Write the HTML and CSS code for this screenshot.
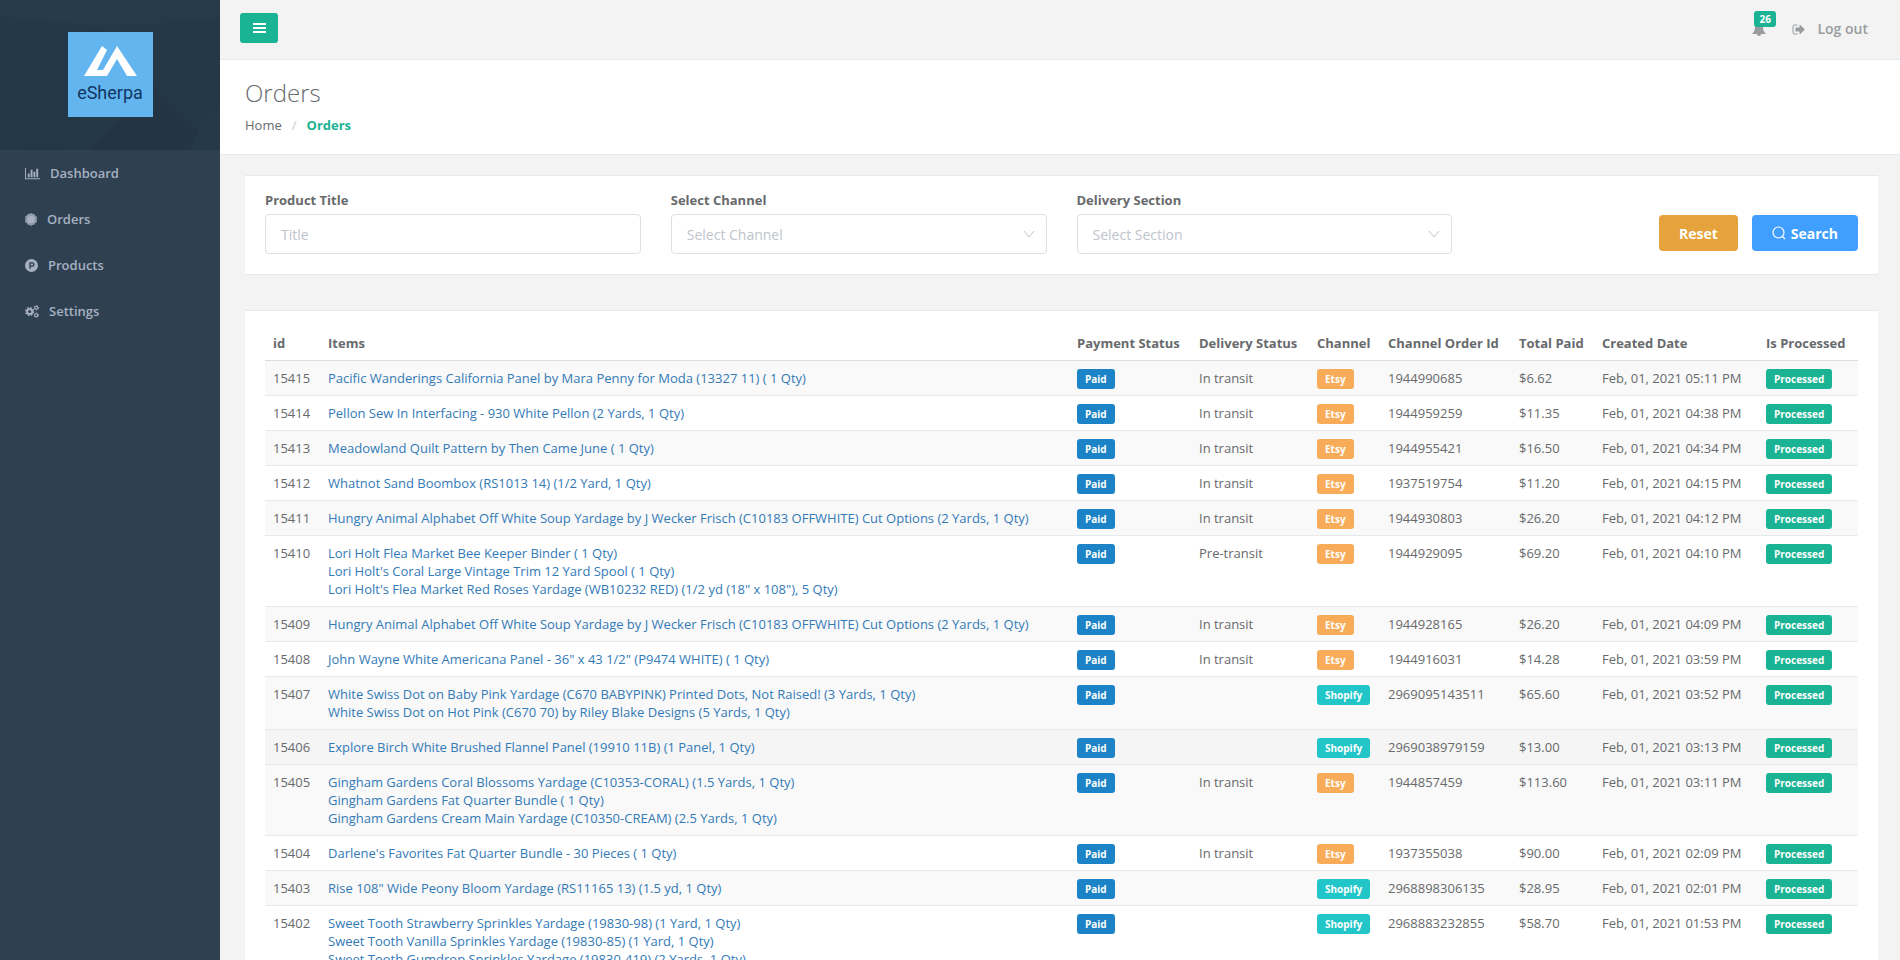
FILE: index.html
```html
<!DOCTYPE html>
<html lang="en">
<head>
  <meta charset="UTF-8" />
  <meta name="viewport" content="width=device-width, initial-scale=1.0"/>
  <title>eSherpa | Orders</title>
  <link rel="stylesheet" href="styles.css">
</head>
<body>
  <div class="wrapper">
    <nav class="sidebar">
      <div class="nav-header">
        <svg class="pattern" viewBox="0 0 220 150" preserveAspectRatio="none" aria-hidden="true">
          <polygon points="0,0 120,0 100,26 0,16" fill="#273b4a"/>
          <polygon points="120,0 220,0 220,20 100,26" fill="#263a49"/>
          <polygon points="0,60 100,26 68,150 25,150" fill="#243747"/>
          <polygon points="153,85 198,130 190,150 90,150" fill="#233545"/>
          <polygon points="198,130 220,110 220,150 190,150" fill="#263949"/>
        </svg>
        <a href="#" class="logo">
          <svg viewBox="0 0 85 85" role="img" aria-label="eSherpa">
            <path d="M16 44 L34 14 L39 18 L29 38 L35 38 L49 14 L69 44 L59 44 L49 27 L39 44 Z" fill="#fff"/>
            <text x="42" y="67" text-anchor="middle" class="logo-text">eSherpa</text>
          </svg>
        </a>
      </div>
      <ul class="menu">
        <li><a href="#">
          <svg width="15" height="13" viewBox="0 128 2048 1536"><path d="M640 896v512h-256v-512h256zm384-512v1024h-256v-1024h256zm1024 1152v128h-2048v-1536h128v1408h1920zm-640-896v768h-256v-768h256zm384-384v1152h-256v-1152h256z"/></svg>
          Dashboard</a></li>
        <li><a href="#">
          <svg width="12" height="13" viewBox="0 0 12 13"><path d="M6 0l1.400.8 1.800.2.900 1.600 1.700 1v5.600l-1.700 1-.900 1.600-1.800.3L6 13l-1.400-.9-1.800-.3-.900-1.600-1.700-1V3.600l1.700-1L2.800 1l1.800-.2z" opacity=".8"/><circle cx="6" cy="6.500" r="3.800"/></svg>
          Orders</a></li>
        <li><a href="#">
          <svg width="13" height="13" viewBox="0 0 13 13"><path fill-rule="evenodd" d="M6.500 0a6.500 6.500 0 1 1 0 13a6.500 6.500 0 0 1 0-13zM4.300 3.200v6.500h1.400V7.800h1.600a2.300 2.300 0 0 0 0-4.600zM5.700 4.600h1.500a.9.9 0 0 1 0 1.800H5.700z"/></svg>
          Products</a></li>
        <li><a href="#">
          <svg width="14" height="13" viewBox="0 0 14 13" fill="none" class="cogs">
            <circle cx="4.700" cy="6.500" r="2.600" stroke-width="2"/>
            <circle cx="4.700" cy="6.500" r="4" stroke-width="1.300" stroke-dasharray="1.600 1.540"/>
            <circle cx="11.300" cy="2.800" r="1.500" stroke-width="1.100"/>
            <circle cx="11.300" cy="2.800" r="2.200" stroke-width="1" stroke-dasharray="1.200 1.100"/>
            <circle cx="11.300" cy="10.200" r="1.500" stroke-width="1.100"/>
            <circle cx="11.300" cy="10.200" r="2.200" stroke-width="1" stroke-dasharray="1.200 1.100"/>
          </svg>
          Settings</a></li>
      </ul>
    </nav>

    <main class="page">
      <header class="topbar">
        <button type="button" class="btn-toggle" aria-label="Toggle menu">
          <svg width="13" height="10" viewBox="0 0 13 10"><path d="M0 0h13v2H0zM0 4h13v2H0zM0 8h13v2H0z" fill="#fff"/></svg>
        </button>
        <div class="top-links">
          <a href="#" class="bell" aria-label="Notifications">
            <svg width="14" height="14" viewBox="0 0 14 14"><path d="M7 0a1 1 0 0 1 1 1.100c2 .4 3 2 3 3.900 0 3 .8 4.800 2.500 6.200V12H9a2 2 0 0 1-4 0H.5v-.8C2.200 9.800 3 8 3 5c0-1.900 1-3.500 3-3.900A1 1 0 0 1 7 0z"/></svg>
            <span class="count">26</span>
          </a>
          <a href="#" class="logout">
            <svg width="13" height="11" viewBox="0 256 1664 1280"><path d="M704 1440q0 4 1 20t.5 26.500-3 23.500-10 19.500-20.500 6.500h-320q-119 0-203.500-84.500t-84.500-203.500v-704q0-119 84.500-203.500t203.500-84.500h320q13 0 22.500 9.500t9.500 22.500q0 4 1 20t.5 26.500-3 23.500-10 19.500-20.500 6.500h-320q-66 0-113 47t-47 113v704q0 66 47 113t113 47h312l11.500 1 11.500 3 8 5.500 7 9 2 13.500zm928-544q0 26-19 45l-544 544q-19 19-45 19t-45-19-19-45v-288h-448q-26 0-45-19t-19-45v-384q0-26 19-45t45-19h448v-288q0-26 19-45t45-19 45 19l544 544q19 19 19 45z"/></svg>
            Log out</a>
        </div>
      </header>

      <div class="page-heading">
        <h2>Orders</h2>
        <ol class="breadcrumb">
          <li><a href="#">Home</a></li>
          <li class="active"><strong>Orders</strong></li>
        </ol>
      </div>

      <div class="content">
        <form class="ibox filters">
          <div class="field">
            <label for="title">Product Title</label>
            <input type="text" id="title" placeholder="Title">
          </div>
          <div class="field">
            <label for="channel">Select Channel</label>
            <div class="select">
              <select id="channel"><option>Select Channel</option><option>Etsy</option><option>Shopify</option></select>
              <svg width="12" height="8" viewBox="0 0 12 8"><path d="M1 1l5 6 5-6"/></svg>
            </div>
          </div>
          <div class="field">
            <label for="section">Delivery Section</label>
            <div class="select">
              <select id="section"><option>Select Section</option><option>Pre-transit</option><option>In transit</option></select>
              <svg width="12" height="8" viewBox="0 0 12 8"><path d="M1 1l5 6 5-6"/></svg>
            </div>
          </div>
          <div class="actions">
            <button type="reset" class="btn btn-warning">Reset</button>
            <button type="button" class="btn btn-primary">
              <svg width="14" height="14" viewBox="0 0 14 14"><circle cx="6.500" cy="6.500" r="5.500"/><path d="M10.500 10.500L13 13"/></svg>
              Search</button>
          </div>
        </form>

        <div class="ibox">
          <table class="table">
            <colgroup>
              <col class="col-id"><col><col class="col-payment"><col class="col-delivery"><col class="col-channel"><col class="col-order"><col class="col-total"><col class="col-date"><col class="col-processed">
            </colgroup>
            <thead>
              <tr><th>id</th><th>Items</th><th>Payment Status</th><th>Delivery Status</th><th>Channel</th><th>Channel Order Id</th><th>Total Paid</th><th>Created Date</th><th>Is Processed</th></tr>
            </thead>
            <tbody>
              <tr>
                <td>15415</td>
                <td><a href="#">Pacific Wanderings California Panel by Mara Penny for Moda (13327 11) ( 1 Qty)</a></td>
                <td><span class="label paid">Paid</span></td><td>In transit</td><td><span class="label etsy">Etsy</span></td>
                <td>1944990685</td><td>$6.62</td><td>Feb, 01, 2021 05:11 PM</td><td><span class="label processed">Processed</span></td>
              </tr>
              <tr>
                <td>15414</td>
                <td><a href="#">Pellon Sew In Interfacing - 930 White Pellon (2 Yards, 1 Qty)</a></td>
                <td><span class="label paid">Paid</span></td><td>In transit</td><td><span class="label etsy">Etsy</span></td>
                <td>1944959259</td><td>$11.35</td><td>Feb, 01, 2021 04:38 PM</td><td><span class="label processed">Processed</span></td>
              </tr>
              <tr>
                <td>15413</td>
                <td><a href="#">Meadowland Quilt Pattern by Then Came June ( 1 Qty)</a></td>
                <td><span class="label paid">Paid</span></td><td>In transit</td><td><span class="label etsy">Etsy</span></td>
                <td>1944955421</td><td>$16.50</td><td>Feb, 01, 2021 04:34 PM</td><td><span class="label processed">Processed</span></td>
              </tr>
              <tr>
                <td>15412</td>
                <td><a href="#">Whatnot Sand Boombox (RS1013 14) (1/2 Yard, 1 Qty)</a></td>
                <td><span class="label paid">Paid</span></td><td>In transit</td><td><span class="label etsy">Etsy</span></td>
                <td>1937519754</td><td>$11.20</td><td>Feb, 01, 2021 04:15 PM</td><td><span class="label processed">Processed</span></td>
              </tr>
              <tr>
                <td>15411</td>
                <td><a href="#">Hungry Animal Alphabet Off White Soup Yardage by J Wecker Frisch (C10183 OFFWHITE) Cut Options (2 Yards, 1 Qty)</a></td>
                <td><span class="label paid">Paid</span></td><td>In transit</td><td><span class="label etsy">Etsy</span></td>
                <td>1944930803</td><td>$26.20</td><td>Feb, 01, 2021 04:12 PM</td><td><span class="label processed">Processed</span></td>
              </tr>
              <tr>
                <td>15410</td>
                <td>
                  <a href="#">Lori Holt Flea Market Bee Keeper Binder ( 1 Qty)</a>
                  <a href="#">Lori Holt's Coral Large Vintage Trim 12 Yard Spool ( 1 Qty)</a>
                  <a href="#">Lori Holt's Flea Market Red Roses Yardage (WB10232 RED) (1/2 yd (18" x 108"), 5 Qty)</a>
                </td>
                <td><span class="label paid">Paid</span></td><td>Pre-transit</td><td><span class="label etsy">Etsy</span></td>
                <td>1944929095</td><td>$69.20</td><td>Feb, 01, 2021 04:10 PM</td><td><span class="label processed">Processed</span></td>
              </tr>
              <tr>
                <td>15409</td>
                <td><a href="#">Hungry Animal Alphabet Off White Soup Yardage by J Wecker Frisch (C10183 OFFWHITE) Cut Options (2 Yards, 1 Qty)</a></td>
                <td><span class="label paid">Paid</span></td><td>In transit</td><td><span class="label etsy">Etsy</span></td>
                <td>1944928165</td><td>$26.20</td><td>Feb, 01, 2021 04:09 PM</td><td><span class="label processed">Processed</span></td>
              </tr>
              <tr>
                <td>15408</td>
                <td><a href="#">John Wayne White Americana Panel - 36" x 43 1/2" (P9474 WHITE) ( 1 Qty)</a></td>
                <td><span class="label paid">Paid</span></td><td>In transit</td><td><span class="label etsy">Etsy</span></td>
                <td>1944916031</td><td>$14.28</td><td>Feb, 01, 2021 03:59 PM</td><td><span class="label processed">Processed</span></td>
              </tr>
              <tr>
                <td>15407</td>
                <td>
                  <a href="#">White Swiss Dot on Baby Pink Yardage (C670 BABYPINK) Printed Dots, Not Raised! (3 Yards, 1 Qty)</a>
                  <a href="#">White Swiss Dot on Hot Pink (C670 70) by Riley Blake Designs (5 Yards, 1 Qty)</a>
                </td>
                <td><span class="label paid">Paid</span></td><td></td><td><span class="label shopify">Shopify</span></td>
                <td>2969095143511</td><td>$65.60</td><td>Feb, 01, 2021 03:52 PM</td><td><span class="label processed">Processed</span></td>
              </tr>
              <tr class="current">
                <td>15406</td>
                <td><a href="#">Explore Birch White Brushed Flannel Panel (19910 11B) (1 Panel, 1 Qty)</a></td>
                <td><span class="label paid">Paid</span></td><td></td><td><span class="label shopify">Shopify</span></td>
                <td>2969038979159</td><td>$13.00</td><td>Feb, 01, 2021 03:13 PM</td><td><span class="label processed">Processed</span></td>
              </tr>
              <tr>
                <td>15405</td>
                <td>
                  <a href="#">Gingham Gardens Coral Blossoms Yardage (C10353-CORAL) (1.5 Yards, 1 Qty)</a>
                  <a href="#">Gingham Gardens Fat Quarter Bundle ( 1 Qty)</a>
                  <a href="#">Gingham Gardens Cream Main Yardage (C10350-CREAM) (2.5 Yards, 1 Qty)</a>
                </td>
                <td><span class="label paid">Paid</span></td><td>In transit</td><td><span class="label etsy">Etsy</span></td>
                <td>1944857459</td><td>$113.60</td><td>Feb, 01, 2021 03:11 PM</td><td><span class="label processed">Processed</span></td>
              </tr>
              <tr>
                <td>15404</td>
                <td><a href="#">Darlene's Favorites Fat Quarter Bundle - 30 Pieces ( 1 Qty)</a></td>
                <td><span class="label paid">Paid</span></td><td>In transit</td><td><span class="label etsy">Etsy</span></td>
                <td>1937355038</td><td>$90.00</td><td>Feb, 01, 2021 02:09 PM</td><td><span class="label processed">Processed</span></td>
              </tr>
              <tr>
                <td>15403</td>
                <td><a href="#">Rise 108" Wide Peony Bloom Yardage (RS11165 13) (1.5 yd, 1 Qty)</a></td>
                <td><span class="label paid">Paid</span></td><td></td><td><span class="label shopify">Shopify</span></td>
                <td>2968898306135</td><td>$28.95</td><td>Feb, 01, 2021 02:01 PM</td><td><span class="label processed">Processed</span></td>
              </tr>
              <tr>
                <td>15402</td>
                <td>
                  <a href="#">Sweet Tooth Strawberry Sprinkles Yardage (19830-98) (1 Yard, 1 Qty)</a>
                  <a href="#">Sweet Tooth Vanilla Sprinkles Yardage (19830-85) (1 Yard, 1 Qty)</a>
                  <a href="#">Sweet Tooth Gumdrop Sprinkles Yardage (19830-419) (2 Yards, 1 Qty)</a>
                </td>
                <td><span class="label paid">Paid</span></td><td></td><td><span class="label shopify">Shopify</span></td>
                <td>2968883232855</td><td>$58.70</td><td>Feb, 01, 2021 01:53 PM</td><td><span class="label processed">Processed</span></td>
              </tr>
            </tbody>
          </table>
        </div>
      </div>
    </main>
  </div>
</body>
</html>
```
FILE: styles.css
```css
* {
  box-sizing: border-box;
}
body {
  margin: 0;
  font-family: "Open Sans", "Noto Sans", sans-serif;
  font-size: 13px;
  line-height: 18px;
  color: #676a6c;
  background: #2f4050;
}
a {
  color: #337ab7;
  text-decoration: none;
}
.wrapper {
  display: flex;
  height: 100vh;
  overflow: hidden;
}

/* sidebar */
.sidebar {
  flex: 0 0 220px;
  background: #2f4050;
}
.nav-header {
  position: relative;
  display: flex;
  justify-content: center;
  padding: 32px 0 33px;
  background: #253848;
}
.pattern {
  position: absolute;
  top: 0;
  left: 0;
  width: 100%;
  height: 100%;
}
.logo {
  position: relative;
  width: 85px;
  height: 85px;
  background: #63b5f0;
}
.logo svg {
  display: block;
}
.logo-text {
  font-family: Roboto, sans-serif;
  font-size: 18px;
  fill: #12355e;
}
.menu {
  list-style: none;
  margin: 0;
  padding: 0;
}
.menu a {
  display: flex;
  align-items: center;
  gap: 10px;
  padding: 14px 25px;
  color: #a7b1c2;
  font-weight: 600;
}
.menu svg {
  fill: #a7b1c2;
}
.menu .cogs {
  fill: none;
  stroke: #a7b1c2;
}

/* top bar and heading */
.page {
  flex: 1;
  min-width: 0;
  background: #f3f3f4;
}
.topbar {
  display: flex;
  justify-content: space-between;
  align-items: flex-start;
  padding: 13px 32px 14px 20px;
  border-bottom: 1px solid #e7eaec;
}
.btn-toggle {
  display: flex;
  align-items: center;
  justify-content: center;
  width: 38px;
  height: 30px;
  padding: 0;
  border: 0;
  border-radius: 3px;
  background: #1ab394;
  cursor: pointer;
}
.top-links {
  display: flex;
  align-items: center;
  gap: 26px;
  height: 32px;
}
.top-links a {
  color: #999c9e;
  font-size: 14px;
  font-weight: 600;
}
.top-links svg {
  display: block;
  fill: #999c9e;
}
.bell {
  position: relative;
}
.top-links .count {
  position: absolute;
  top: -11px;
  left: 2px;
  padding: 1px 5px;
  border-radius: 3px;
  background: #1ab394;
  color: #fff;
  font-size: 10px;
  font-weight: 700;
  line-height: 14px;
}
.logout {
  display: flex;
  align-items: center;
  gap: 12px;
}
.page-heading {
  padding: 20px 25px;
  background: #fff;
  border-bottom: 1px solid #e7eaec;
}
.page-heading h2 {
  margin: 0 0 10px;
  font-size: 24px;
  font-weight: 300;
  line-height: 26px;
}
.breadcrumb {
  display: flex;
  list-style: none;
  margin: 0;
  padding: 0;
}
.breadcrumb a {
  color: #676a6c;
}
.breadcrumb li + li::before {
  content: "/";
  padding: 0 10px;
  color: #ccc;
}
.breadcrumb strong {
  color: #1ab394;
}

/* boxes */
.content {
  padding: 20px 22px 0 25px;
}
.ibox {
  margin-bottom: 35px;
  padding: 15px 20px 20px;
  background: #fff;
  border: 1px solid #e7eaec;
  border-width: 1px 0;
}
.filters {
  display: grid;
  grid-template-columns: repeat(4, 1fr);
  gap: 30px;
}
.field label {
  display: block;
  margin-bottom: 5px;
  font-weight: 700;
}
.field input,
.field select {
  display: block;
  width: 100%;
  height: 40px;
  padding: 0 15px;
  border: 1px solid #dcdfe6;
  border-radius: 4px;
  background: #fff;
  color: #c0c4cc;
  font-family: inherit;
  font-size: 14px;
  appearance: none;
}
.field input::placeholder {
  color: #c0c4cc;
}
.select {
  position: relative;
}
.select svg {
  position: absolute;
  top: 16px;
  right: 12px;
  fill: none;
  stroke: #c0c4cc;
  pointer-events: none;
}
.actions {
  display: flex;
  justify-content: flex-end;
  align-items: flex-end;
  gap: 14px;
  padding-bottom: 3px;
}
.btn {
  display: flex;
  align-items: center;
  justify-content: center;
  gap: 5px;
  height: 36px;
  padding: 0 20px;
  border: 0;
  border-radius: 4px;
  color: #fff;
  font-family: inherit;
  font-size: 14px;
  font-weight: 700;
  cursor: pointer;
}
.btn svg {
  fill: none;
  stroke: #fff;
  stroke-width: 1.2;
}
.btn-warning {
  background: #e6a23c;
}
.btn-primary {
  background: #409eff;
}

/* orders table */
.table {
  width: 100%;
  table-layout: fixed;
  border-collapse: collapse;
}
.table th,
.table td {
  padding: 8px;
  text-align: left;
  vertical-align: top;
}
.table th {
  border-bottom: 1px solid #ddd;
  font-weight: 700;
  white-space: nowrap;
}
.table td {
  border-top: 1px solid #e7eaec;
}
.table tbody tr:nth-child(odd) {
  background: #f9f9f9;
}
.table tbody tr.current,
.table tbody tr:hover {
  background: #f5f5f5;
}
.table td a {
  display: block;
}
.col-id {
  width: 55px;
}
.col-payment {
  width: 122px;
}
.col-delivery {
  width: 118px;
}
.col-channel {
  width: 71px;
}
.col-order {
  width: 131px;
}
.col-total {
  width: 83px;
}
.col-date {
  width: 164px;
}
.col-processed {
  width: 100px;
}
.label {
  padding: 3px 8px;
  border-radius: 3px;
  color: #fff;
  font-size: 10px;
  font-weight: 700;
  line-height: 10px;
}
.paid {
  background: #1c84c6;
}
.etsy {
  background: #f8ac59;
}
.shopify {
  background: #23c6c8;
}
.processed {
  background: #1ab394;
}
```
